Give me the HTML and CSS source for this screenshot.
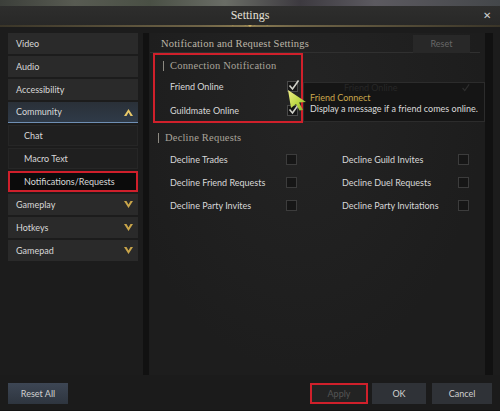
FILE: index.html
```html
<!DOCTYPE html>
<html lang="en">
<head>
    <meta charset="UTF-8">
    <meta name="viewport" content="width=device-width, initial-scale=1.0">
    <title>Settings</title>
    <link rel="stylesheet" href="styles.css">
</head>
<body>
    <div class="scene"></div>
    <div class="titlebar">
        <span class="title">Settings</span>
        <span class="close">&#x2715;</span>
    </div>
    <div class="ornament">
        <svg width="40" height="6" viewBox="0 0 40 6">
            <path d="M2 3 Q10 0 16 3 L20 0 L24 3 Q30 0 38 3" fill="none" stroke="#b59a55" stroke-width="1"/>
            <path d="M20 1 L22 3 L20 5 L18 3 Z" fill="#c9ad62"/>
        </svg>
    </div>

    <div class="content">
        <div class="sidebar">
            <div class="menu-item">Video</div>
            <div class="menu-item">Audio</div>
            <div class="menu-item">Accessibility</div>
            <div class="menu-item open">Community
                <svg class="chev" width="9" height="7" viewBox="0 0 9 7"><path d="M0 7 L4.5 0 L9 7 L6.5 7 L4.5 3.5 L2.5 7 Z" fill="#e8c868"/></svg>
            </div>
            <div class="menu-item sub">Chat</div>
            <div class="menu-item sub">Macro Text</div>
            <div class="menu-item sub selected">Notifications/Requests</div>
            <div class="menu-item">Gameplay
                <svg class="chev" width="9" height="7" viewBox="0 0 9 7"><path d="M0 0 L4.5 7 L9 0 L6.5 0 L4.5 3.5 L2.5 0 Z" fill="#c9a54a"/></svg>
            </div>
            <div class="menu-item">Hotkeys
                <svg class="chev" width="9" height="7" viewBox="0 0 9 7"><path d="M0 0 L4.5 7 L9 0 L6.5 0 L4.5 3.5 L2.5 0 Z" fill="#c9a54a"/></svg>
            </div>
            <div class="menu-item">Gamepad
                <svg class="chev" width="9" height="7" viewBox="0 0 9 7"><path d="M0 0 L4.5 7 L9 0 L6.5 0 L4.5 3.5 L2.5 0 Z" fill="#c9a54a"/></svg>
            </div>
        </div>
        <div class="track"></div>

        <div class="main">
            <div class="main-head">
                <span class="heading">Notification and Request Settings</span>
                <span class="btn-reset">Reset</span>
            </div>

            <div class="section connection">
                <div class="section-title">Connection Notification</div>
                <div class="row">
                    <span class="label">Friend Online</span>
                    <span class="check on"><svg width="11" height="11" viewBox="0 0 11 11"><path d="M1.5 5.5 L4.5 9 L10.5 0.5" fill="none" stroke="#d0d0c8" stroke-width="1.6"/></svg></span>
                </div>
                <div class="row">
                    <span class="label">Guildmate Online</span>
                    <span class="check on"><svg width="11" height="11" viewBox="0 0 11 11"><path d="M1.5 5.5 L4.5 9 L10.5 0.5" fill="none" stroke="#d0d0c8" stroke-width="1.6"/></svg></span>
                </div>
            </div>

            <div class="section decline">
                <div class="section-title">Decline Requests</div>
                <div class="grid">
                    <span class="label">Decline Trades</span><span class="check"></span><span></span>
                    <span class="label">Decline Guild Invites</span><span class="check"></span>
                    <span class="label">Decline Friend Requests</span><span class="check"></span><span></span>
                    <span class="label">Decline Duel Requests</span><span class="check"></span>
                    <span class="label">Decline Party Invites</span><span class="check"></span><span></span>
                    <span class="label">Decline Party Invitations</span><span class="check"></span>
                </div>
            </div>

            <!-- hover tooltip for the Friend Online option -->
            <div class="tooltip">
                <div class="tip-ghost">
                    <span>Friend Online</span>
                    <svg width="9" height="8" viewBox="0 0 11 11"><path d="M1.5 5.5 L4.5 9 L10.5 0.5" fill="none" stroke="#2e2e2e" stroke-width="1.6"/></svg>
                </div>
                <div class="tip-title">Friend Connect</div>
                <div class="tip-text">Display a message if a friend comes online.</div>
            </div>
            <svg class="cursor" width="22" height="22" viewBox="0 0 22 22">
                <defs>
                    <linearGradient id="cur" x1="0" y1="0" x2="1" y2="1">
                        <stop offset="0" stop-color="#f4f08a"/>
                        <stop offset="0.6" stop-color="#b8d640"/>
                        <stop offset="1" stop-color="#7fa82a"/>
                    </linearGradient>
                </defs>
                <path d="M1 1 L19 13 L12 13.5 L16 21 L12.5 21.5 L9 15 L4 19 Z" fill="url(#cur)"/>
            </svg>
        </div>
        <div class="track right"></div>
    </div>

    <div class="footer">
        <span class="btn reset-all">Reset All</span>
        <span class="btn apply">Apply</span>
        <span class="btn ok">OK</span>
        <span class="btn cancel">Cancel</span>
    </div>
</body>
</html>
```

FILE: styles.css
```css
body {
    margin: 0;
    width: 500px;
    height: 411px;
    overflow: hidden;
    background: #1c1c1c;
    font-family: Lato, "Noto Sans", sans-serif;
    font-size: 9px;
    color: #d6d6d6;
}
.scene {
    height: 6px;
    background: linear-gradient(90deg, #3c3f3a 0%, #585b52 15%, #4a5045 30%, #6a6d66 45%, #3d3a40 60%, #5c5a60 75%, #44474a 100%);
}
.titlebar {
    height: 19px;
    background: linear-gradient(#2e2e2d, #282827);
    position: relative;
    text-align: center;
}
.title {
    font-family: "Liberation Serif", serif;
    font-size: 12px;
    line-height: 19px;
    color: #e4e0d8;
}
.close {
    position: absolute;
    right: 9px;
    top: 3px;
    font-size: 10px;
    color: #cfcfcf;
}
.ornament {
    height: 2px;
    background: linear-gradient(90deg, #3a3528 0%, #6f6447 40%, #8a7b52 50%, #6f6447 60%, #3a3528 100%);
    display: flex;
    justify-content: center;
}
.ornament svg {
    margin-top: -3px;
}
.content {
    display: flex;
    padding-top: 6px;
    height: 348px;
    box-sizing: border-box;
}
.sidebar {
    width: 130px;
    margin-left: 8px;
    display: flex;
    flex-direction: column;
    gap: 2px;
}
.menu-item {
    height: 21px;
    line-height: 21px;
    padding-left: 8px;
    background: #2a2a2a;
    color: #d8d8d8;
    position: relative;
    box-sizing: border-box;
}
.menu-item.open {
    background: linear-gradient(#2a3038, #2f3a48);
    border-bottom: 1px solid #6f8fb4;
    line-height: 20px;
}
.menu-item.sub {
    padding-left: 15px;
    background: #1f1f1f;
    border: 1px solid #262626;
    line-height: 19px;
}
.menu-item.selected {
    background: #0b0b0b;
    border: 2px solid #cf1f2b;
    line-height: 17px;
    padding-left: 14px;
}
.chev {
    position: absolute;
    right: 5px;
    top: 7px;
}
.track {
    width: 6px;
    margin-left: 5px;
    background: #111;
}
.track.right {
    width: 8px;
    margin-left: 0;
}
.main {
    width: 335px;
    margin-left: 1px;
    position: relative;
    background: radial-gradient(ellipse at 45% 20%, #242424, #1d1d1d 70%);
}
.main-head {
    height: 19px;
    display: flex;
    align-items: center;
    justify-content: space-between;
    padding: 0 10px 0 11px;
    border-bottom: 1px solid #303030;
    margin-right: 5px;
}
.heading {
    font-family: "Liberation Serif", serif;
    font-size: 10.5px;
    letter-spacing: 0.2px;
    color: #bdb6a8;
    margin-top: 1px;
}
.btn-reset {
    width: 57px;
    height: 18px;
    line-height: 18px;
    text-align: center;
    background: #282828;
    color: #676767;
    margin-top: 2px;
}
.section-title {
    font-family: "Liberation Serif", serif;
    font-size: 10.5px;
    letter-spacing: 0.2px;
    color: #a9a49a;
    border-left: 1px solid #8d8a82;
    margin-left: 8px;
    padding-left: 6px;
    height: 10px;
    line-height: 10px;
}
.connection {
    width: 150px;
    height: 70px;
    margin-left: 3px;
    border: 2px solid #d0202b;
    box-sizing: border-box;
    padding-top: 6px;
}
.connection .section-title {
    margin-bottom: 3px;
}
.row {
    display: grid;
    grid-template-columns: 117px 11px;
    align-items: center;
    height: 24px;
    padding-left: 15px;
}
.label {
    color: #d8d8d8;
}
.check {
    width: 11px;
    height: 11px;
    border: 1px solid #3c3c3c;
    background: #161616;
    box-sizing: border-box;
    display: block;
}
.check.on {
    border-color: #4a4a4a;
}
.check.on svg {
    display: block;
    margin-top: -2px;
}
.decline {
    padding-top: 10px;
}
.grid {
    display: grid;
    grid-template-columns: 116px 11px 45px 116px 11px;
    grid-auto-rows: 23px;
    align-items: center;
    padding-left: 20px;
    margin-top: 5px;
}
.tooltip {
    position: absolute;
    left: 153px;
    top: 49px;
    width: 182px;
    height: 40px;
    background: #151515;
    border: 1px solid #2c2c2c;
    box-sizing: border-box;
    padding-left: 6px;
}
.tip-ghost {
    display: flex;
    align-items: center;
    justify-content: space-between;
    color: #272727;
    height: 8px;
    line-height: 8px;
    padding: 1px 14px 0 34px;
}
.tip-title {
    color: #caa64c;
    line-height: 11px;
}
.tip-text {
    color: #dadada;
    line-height: 11px;
}
.cursor {
    position: absolute;
    left: 137px;
    top: 56px;
}
.footer {
    height: 36px;
    display: flex;
    align-items: flex-start;
    padding-top: 8px;
    box-sizing: border-box;
    background: #1b1b1b;
    border-bottom: 1px solid #141414;
}
.btn {
    height: 21px;
    line-height: 21px;
    text-align: center;
    box-sizing: border-box;
    color: #d0d0d0;
    background: #2f3237;
}
.reset-all {
    width: 60px;
    margin-left: 8px;
    background: linear-gradient(#3d4654, #2e353f);
}
.apply {
    width: 58px;
    margin-left: auto;
    border: 2px solid #d0202b;
    background: #232323;
    color: #555;
    line-height: 17px;
}
.ok {
    width: 54px;
    margin-left: 4px;
}
.cancel {
    width: 60px;
    margin-left: 6px;
    margin-right: 8px;
}
```
